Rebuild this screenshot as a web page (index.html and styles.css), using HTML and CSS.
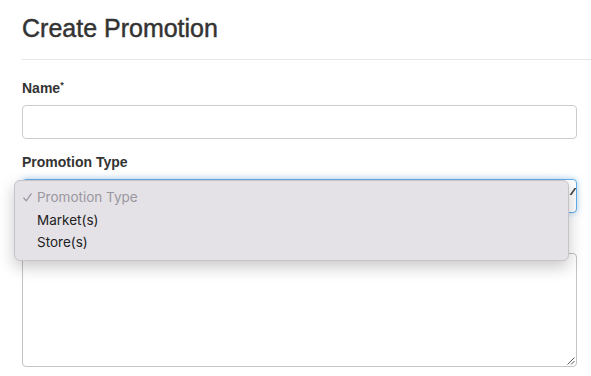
FILE: index.html
```html
<!DOCTYPE html>
<html>
<head>
<meta charset="utf-8">
<link rel="stylesheet" href="styles.css">
</head>
<body>
<div class="page">
  <h1 class="title">Create Promotion</h1>
  <hr class="rule">
  <form class="form">
    <div class="group">
      <label class="label">Name<sup class="req">*</sup></label>
      <input class="control" type="text">
    </div>
    <div class="group">
      <label class="label">Promotion Type</label>
      <div class="select-wrap">
        <div class="control select focus"><span class="chev"></span></div>
        <ul class="menu">
          <li class="opt sel"><svg class="check" width="9" height="9" viewBox="0 0 9 9"><path d="M0.8 5 L3.2 7.8 L8.2 0.8" stroke="#9a979e" stroke-width="1.2" fill="none" stroke-linecap="round" stroke-linejoin="round"/></svg>Promotion Type</li>
          <li class="opt">Market(s)</li>
          <li class="opt">Store(s)</li>
        </ul>
      </div>
    </div>
    <div class="group">
      <div class="label spacer"></div>
      <div class="control area">
        <svg class="grip" width="9" height="9" viewBox="0 0 9 9"><path d="M8.5 1.5 L1.5 8.5 M8.5 5 L5 8.5" stroke="#555" stroke-width="1" fill="none"/></svg>
      </div>
    </div>
  </form>
</div>
</body>
</html>
```
FILE: styles.css
```css
* { box-sizing: border-box; }
html, body { margin: 0; padding: 0; background: #fff; overflow: hidden; }
body { font-family: "Liberation Sans", Arial, sans-serif; color: #333; }
.page { padding: 0 14px 0 22px; }
.title { margin: 0; padding-top: 14px; font-size: 25px; font-weight: 400; line-height: 28px; color: #333; -webkit-text-stroke: 0.45px #333; }
.rule { margin: 17px -14px 0 0; border: 0; border-top: 1px solid #e6e6e6; height: 0; }
.form { padding-top: 20px; }
.group { display: flex; flex-direction: column; margin-bottom: 15px; }
.label { font-size: 14px; font-weight: bold; line-height: 17px; margin-bottom: 8px; color: #333; }
.spacer { height: 17px; }
.req { font-size: 9px; vertical-align: top; position: relative; top: -3px; }
.control { display: block; width: 555px; height: 34px; border: 1px solid #ccc; border-radius: 4px; background: #fff; margin: 0; padding: 0; font: inherit; }
.select-wrap { position: relative; }
.select.focus { border-color: #66afe9; box-shadow: 0 0 6px rgba(102,175,233,.55); position: relative; }
.chev { position: absolute; right: 2px; top: 8px; width: 4px; height: 7px; border-right: 2px solid #444; transform: skewX(-35deg); }
.menu { position: absolute; z-index: 10; left: -8px; top: 1px; width: 555px; margin: 0; padding: 5px 0 6px; list-style: none; background: #e4e1e7; border: 1px solid #c6c4c9; border-radius: 6px; box-shadow: 0 6px 16px rgba(0,0,0,.22); font-family: "Inter", "Liberation Sans", sans-serif; font-size: 13.5px; color: #222; }
.opt { height: 22.5px; line-height: 22.5px; padding-left: 22px; position: relative; }
.opt.sel { color: #9a979e; }
.check { position: absolute; left: 8px; top: 7px; }
.area { height: 114px; position: relative; border-color: #c4c4c4; }
.grip { position: absolute; right: 1px; bottom: 1px; }
```
